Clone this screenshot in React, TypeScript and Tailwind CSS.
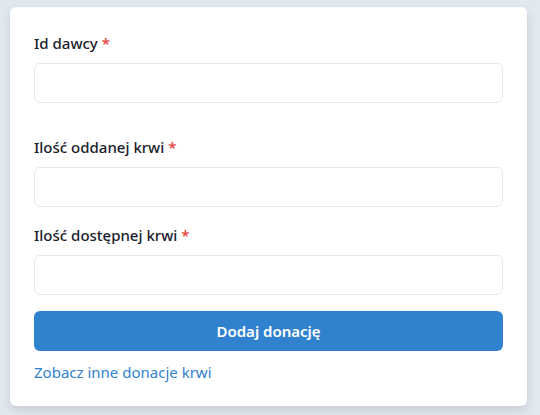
import React from "react";

function Field({ label, className = "" }: { label: string; className?: string }) {
  return (
    <div className={className}>
      <label className="mb-2 block text-[15px] leading-6 font-medium text-[#1a202c]">
        {label} <span className="text-[#e53e3e]">*</span>
      </label>
      <input
        type="text"
        className="block h-10 w-full rounded-md border border-[#e2e8f0] bg-white px-4 outline-none"
      />
    </div>
  );
}

export default function App() {
  return (
    <div className="h-[415px] w-[540px] bg-[#e2e8f0] pl-[10px] pt-[7px] font-['Noto_Sans',sans-serif]">
      <div className="w-[517px] rounded-md bg-white px-6 pb-[22px] pt-6 shadow-[0_4px_10px_rgba(0,0,0,0.12)]">
        <Field label="Id dawcy" className="mb-8" />
        <Field label="Ilość oddanej krwi" className="mb-4" />
        <Field label="Ilość dostępnej krwi" className="mb-4" />
        <button className="h-10 w-full rounded-md bg-[#3182ce] text-[15px] font-semibold text-white">
          Dodaj donację
        </button>
        <a href="#" className="mt-[9px] block text-[15px] leading-6 text-[#3182ce]">
          Zobacz inne donacje krwi
        </a>
      </div>
    </div>
  );
}
